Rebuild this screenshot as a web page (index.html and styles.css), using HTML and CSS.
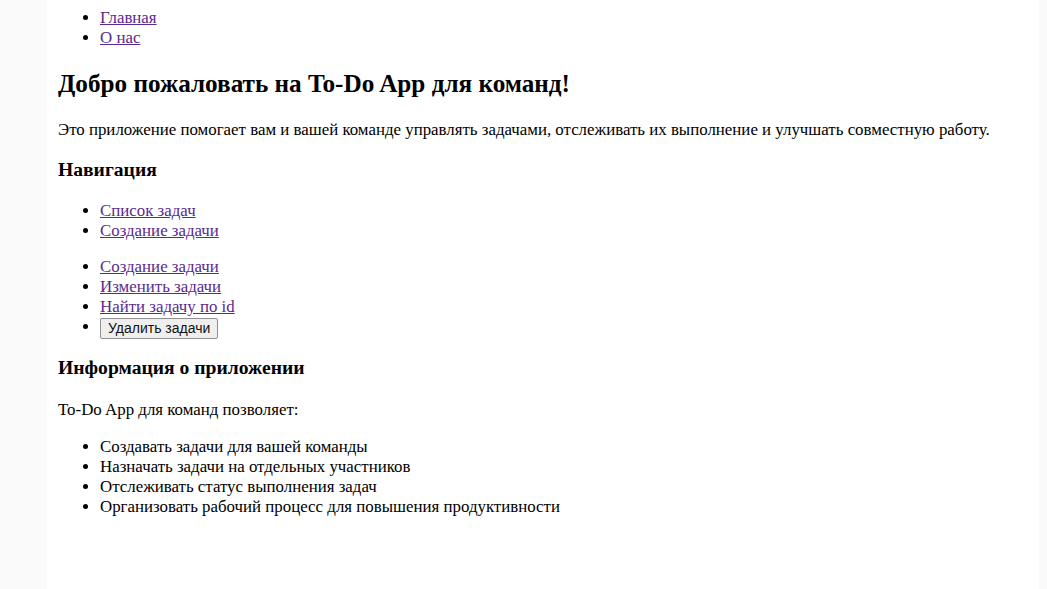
FILE: index.html
```html
<!DOCTYPE html>
<html lang="ru">
<head>
<meta charset="utf-8">
<title>To-Do App</title>
<link rel="stylesheet" href="styles.css">
</head>
<body>
<div class="page">
  <ul class="list nav">
    <li><a href="#">Главная</a></li>
    <li><a href="#">О нас</a></li>
  </ul>
  <h1 class="title">Добро пожаловать на To-Do App для команд!</h1>
  <p class="text intro">Это приложение помогает вам и вашей команде управлять задачами, отслеживать их выполнение и улучшать совместную работу.</p>
  <h3 class="subtitle">Навигация</h3>
  <ul class="list links1">
    <li><a href="#">Список задач</a></li>
    <li><a href="#">Создание задачи</a></li>
  </ul>
  <ul class="list links2">
    <li><a href="#">Создание задачи</a></li>
    <li><a href="#">Изменить задачи</a></li>
    <li><a href="#">Найти задачу по id</a></li>
    <li class="btn-item"><button class="btn" type="button">Удалить задачи</button></li>
  </ul>
  <h3 class="subtitle info">Информация о приложении</h3>
  <p class="text allows">To-Do App для команд позволяет:</p>
  <ul class="list features">
    <li>Создавать задачи для вашей команды</li>
    <li>Назначать задачи на отдельных участников</li>
    <li>Отслеживать статус выполнения задач</li>
    <li>Организовать рабочий процесс для повышения продуктивности</li>
  </ul>
</div>
</body>
</html>
```

FILE: styles.css
```css
html, body {
  margin: 0;
  padding: 0;
  background: #fafafa;
}

body {
  font-family: "Liberation Serif", "Times New Roman", serif;
  font-size: 16.86px;
  line-height: 20px;
  color: #000;
}

.page {
  margin: 0 8px 0 47px;
  background: #fff;
  min-height: 589px;
  padding: 8px 11px 1px;
  box-sizing: border-box;
}

.list {
  margin: 0;
  padding-left: 42px;
  list-style: disc;
}

.list a {
  color: #5a2a91;
  text-decoration: underline;
}

.title {
  font-size: 25.2px;
  line-height: 29px;
  font-weight: bold;
  margin: 21px 0 0;
}

.text {
  margin: 0;
}

.intro {
  margin-top: 22px;
}

.subtitle {
  font-size: 19.6px;
  line-height: 23px;
  font-weight: bold;
  margin: 18px 0 0;
}

.links1 {
  margin-top: 20px;
}

.links2 {
  margin-top: 16px;
}

.btn-item {
  height: 22px;
}

.btn {
  font-family: "Liberation Sans", Arial, sans-serif;
  font-size: 14px;
  line-height: 17px;
  padding: 1px 7px;
  margin: 1px 0 0;
  background: #efefef;
  border: 1px solid #8f8f8f;
  border-radius: 2px;
  color: #111;
  vertical-align: top;
}

.info {
  margin-top: 17px;
}

.allows {
  margin-top: 21px;
}

.features {
  margin-top: 17px;
}
```
